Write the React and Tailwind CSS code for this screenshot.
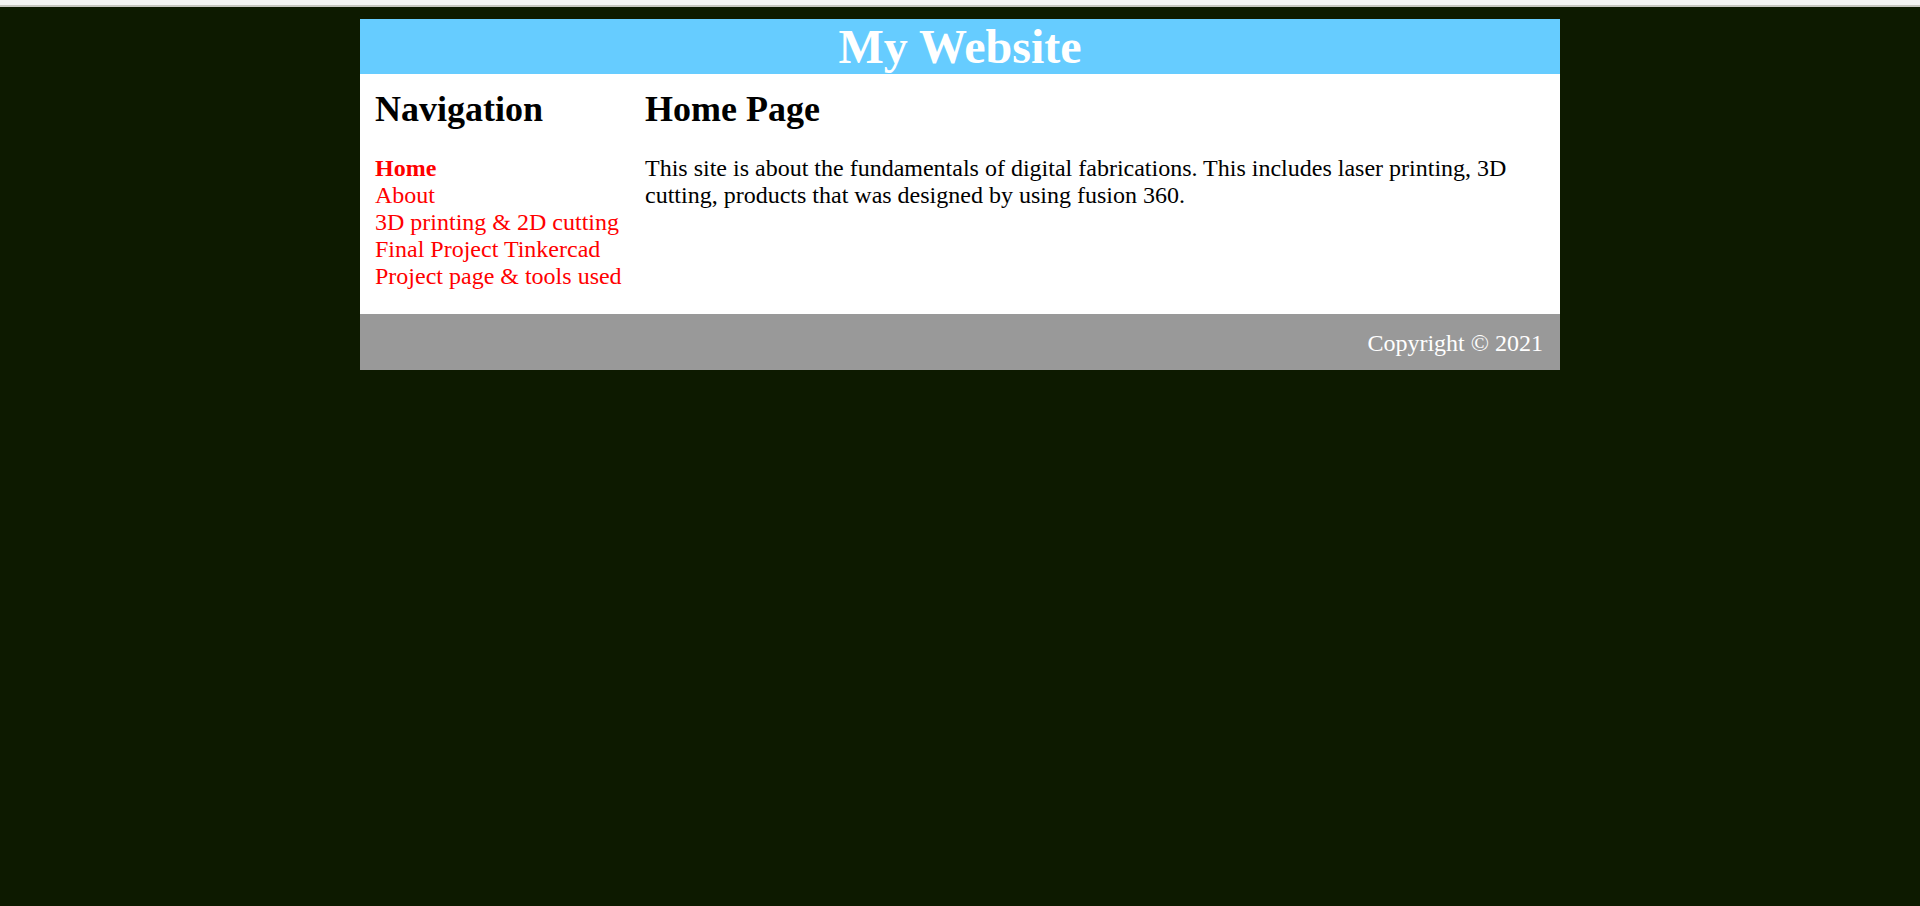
import React from 'react';

const links = [
  { label: 'Home', active: true },
  { label: 'About' },
  { label: '3D printing & 2D cutting' },
  { label: 'Final Project Tinkercad' },
  { label: 'Project page & tools used' },
];

export default function App() {
  return (
    <div className="min-h-[906px] bg-[#0d1a00] font-['Liberation_Serif','Times_New_Roman',serif] text-[24px] leading-[normal]">
      <div className="h-[7px] bg-[#f3f3f3] border-b-2 border-[#c6c6c0]" />
      <div className="w-[1200px] mx-auto mt-[12px]">
        <header className="bg-[#66ccff] text-center">
          <h1 className="text-[48px] font-bold text-white leading-[55px]">My Website</h1>
        </header>
        <div className="flex bg-white">
          <nav className="w-[270px] shrink-0 pl-[15px] pt-[15px] pb-[24px] whitespace-nowrap">
            <h2 className="text-[36px] font-bold text-black leading-[41px] mb-[25px]">Navigation</h2>
            <ul className="leading-[27px]">
              {links.map(l => (
                <li key={l.label}>
                  <a href="#" className={`text-[#f00] ${l.active ? 'font-bold' : ''}`}>{l.label}</a>
                </li>
              ))}
            </ul>
          </nav>
          <main className="flex-1 pl-[15px] pr-[15px] pt-[15px]">
            <h2 className="text-[36px] font-bold text-black leading-[41px] mb-[25px]">Home Page</h2>
            <p className="text-black leading-[27px]">
              This site is about the fundamentals of digital fabrications. This includes laser printing, 3D cutting, products that was designed by using fusion 360.
            </p>
          </main>
        </div>
        <footer className="bg-[#999999] h-[56px] flex items-center justify-end pr-[17px]">
          <p className="text-white leading-[27px] translate-y-[1px]">Copyright © 2021</p>
        </footer>
      </div>
    </div>
  );
}
